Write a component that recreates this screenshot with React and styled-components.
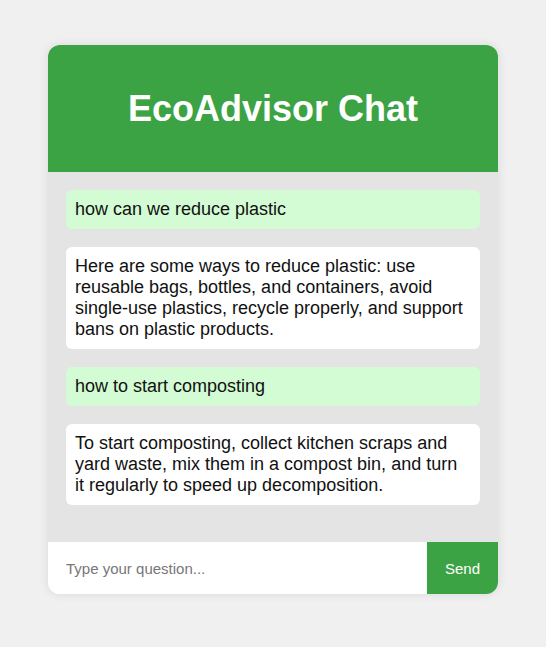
import styled, { createGlobalStyle } from "styled-components";

const GlobalStyle = createGlobalStyle`
  body {
    margin: 0;
    background-color: #f0f0f0;
    font-family: "Liberation Sans", Arial, sans-serif;
  }
`;

const messages = [
  { from: "user", text: "how can we reduce plastic" },
  {
    from: "bot",
    text: "Here are some ways to reduce plastic: use reusable bags, bottles, and containers, avoid single-use plastics, recycle properly, and support bans on plastic products.",
  },
  { from: "user", text: "how to start composting" },
  {
    from: "bot",
    text: "To start composting, collect kitchen scraps and yard waste, mix them in a compost bin, and turn it regularly to speed up decomposition.",
  },
];

export default function App() {
  return (
    <>
      <GlobalStyle />
      <Page>
        <ChatCard>
          <Header>EcoAdvisor Chat</Header>
          <MessageList>
            {messages.map((m, i) => (
              <Bubble key={i} $user={m.from === "user"}>
                {m.text}
              </Bubble>
            ))}
          </MessageList>
          <InputRow>
            <QuestionInput placeholder="Type your question..." />
            <SendButton>Send</SendButton>
          </InputRow>
        </ChatCard>
      </Page>
    </>
  );
}

const Page = styled.div`
  display: flex;
  justify-content: center;
  align-items: flex-start;
  padding-top: 45px;
  min-height: 100vh;
  box-sizing: border-box;
`;

const ChatCard = styled.div`
  width: 450px;
  border-radius: 12px;
  overflow: hidden;
  background-color: #ffffff;
  box-shadow: 0 0 10px rgba(0, 0, 0, 0.1);
  display: flex;
  flex-direction: column;
`;

const Header = styled.h1`
  margin: 0;
  height: 127px;
  display: flex;
  align-items: center;
  justify-content: center;
  background-color: #3ca344;
  color: #ffffff;
  font-size: 36px;
  font-weight: 700;
`;

const MessageList = styled.div`
  background-color: #e4e4e4;
  padding: 18px 18px 19px;
  display: flex;
  flex-direction: column;
`;

const Bubble = styled.div`
  background-color: ${(p) => (p.$user ? "#d4fcd4" : "#ffffff")};
  color: #111111;
  border-radius: 6px;
  padding: 9px 10px 9px 9px;
  margin-bottom: 18px;
  font-size: 18px;
  line-height: 21px;
`;

const InputRow = styled.div`
  display: flex;
  height: 52px;
`;

const QuestionInput = styled.input`
  flex: 1;
  border: none;
  outline: none;
  padding: 0 18px;
  font-size: 15px;
  font-family: "Liberation Sans", Arial, sans-serif;
  color: #222;

  &::placeholder {
    color: #777777;
  }
`;

const SendButton = styled.button`
  border: none;
  background-color: #3ca344;
  color: #ffffff;
  padding: 0 18px;
  font-size: 15px;
  font-family: "Liberation Sans", Arial, sans-serif;
  cursor: pointer;
`;
